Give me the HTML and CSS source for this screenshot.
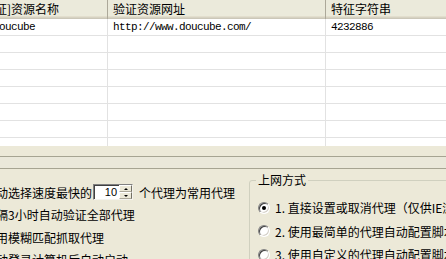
FILE: index.html
```html
<!DOCTYPE html>
<html lang="zh-CN">
<head>
<meta charset="utf-8">
<link rel="stylesheet" href="styles.css">
</head>
<body>
<div class="list">
  <div class="row head">
    <div class="cell c1">[验证]资源名称</div>
    <div class="cell c2">验证资源网址</div>
    <div class="cell c3">特征字符串</div>
  </div>
  <div class="row">
    <div class="cell c1 mono">doucube</div>
    <div class="cell c2 mono">http://www.doucube.com/</div>
    <div class="cell c3 mono">4232886</div>
  </div>
  <div class="row"><div class="cell c1"></div><div class="cell c2"></div><div class="cell c3"></div></div>
  <div class="row"><div class="cell c1"></div><div class="cell c2"></div><div class="cell c3"></div></div>
  <div class="row"><div class="cell c1"></div><div class="cell c2"></div><div class="cell c3"></div></div>
  <div class="row"><div class="cell c1"></div><div class="cell c2"></div><div class="cell c3"></div></div>
  <div class="row"><div class="cell c1"></div><div class="cell c2"></div><div class="cell c3"></div></div>
  <div class="row"><div class="cell c1"></div><div class="cell c2"></div><div class="cell c3"></div></div>
  <div class="row"><div class="cell c1"></div><div class="cell c2"></div><div class="cell c3"></div></div>
</div>
<div class="sep"></div>
<div class="bottom">
  <div class="opts">
    <div class="opt">自动选择速度最快的<span class="spin"><span class="val">10</span><span class="btns"><span class="btn"><i class="up"></i></span><span class="btn"><i class="dn"></i></span></span></span>个代理为常用代理</div>
    <div class="opt">每隔3小时自动验证全部代理</div>
    <div class="opt">启用模糊匹配抓取代理</div>
    <div class="opt">自动登录计算机后自动启动</div>
  </div>
  <fieldset class="group">
    <legend>上网方式</legend>
    <div class="radio-row"><span class="radio on"></span><span>1. 直接设置或取消代理（仅供IE浏览器使用）</span></div>
    <div class="radio-row"><span class="radio"></span><span>2. 使用最简单的代理自动配置脚本</span></div>
    <div class="radio-row"><span class="radio"></span><span>3. 使用自定义的代理自动配置脚本</span></div>
  </fieldset>
</div>
</body>
</html>
```
FILE: styles.css
```css
html, body {
  margin: 0;
  padding: 0;
}
body {
  width: 446px;
  height: 259px;
  overflow: hidden;
  background: #ece9d8;
  font-family: "Noto Sans CJK SC", sans-serif;
  font-size: 12px;
  color: #000;
}
.list {
  width: 473px;
  height: 146px;
  margin-left: -27px;
  background: #fff;
  overflow: hidden;
}
.row {
  display: grid;
  grid-template-columns: 135px 218px 1fr;
  height: 17px;
  box-sizing: border-box;
  border-bottom: 1px solid #e2e2e2;
}
.cell {
  box-sizing: border-box;
  border-right: 1px solid #e2e2e2;
  white-space: nowrap;
  overflow: hidden;
  line-height: 16px;
}
.c1 { padding-left: 20px; }
.c2 { padding-left: 5px; }
.c3 { padding-left: 5px; border-right: none; }
.mono {
  font-family: "Liberation Mono", monospace;
  font-size: 11px;
  letter-spacing: -0.6px;
}
.head {
  height: 19px;
  border-bottom: none;
}
.head .cell {
  background: #ebeadb;
  box-shadow: inset 0 -1px 0 #cbc7b8, inset 0 -2px 0 #d6d2c2, inset 0 -3px 0 #e2decd;
  border-right: 1px solid #aca899;
  line-height: 17px;
}
.head .c1 { padding-left: 6px; }
.head .c3 { border-right: none; }
.sep {
  margin-top: 10px;
  height: 11px;
  border-top: 1px solid #a6a492;
  border-bottom: 1px solid #a6a492;
  background: #eae8da;
}
.bottom {
  display: flex;
  align-items: flex-start;
}
.opts {
  flex: none;
  width: 265px;
  margin-left: -16px;
  padding-top: 12px;
}
.opt {
  height: 22.5px;
  display: flex;
  align-items: center;
  white-space: nowrap;
}
.spin {
  display: inline-flex;
  box-sizing: border-box;
  width: 40px;
  height: 16px;
  margin: 0 6px 0 1px;
  background: #fff;
  border-top: 1px solid #7f9db9;
  border-left: 1px solid #7f9db9;
  border-bottom: 1px solid #7f9db9;
  border-right: 1px solid #7f9db9;
  border-color: #808080 #f4f3ee #f4f3ee #808080;
  box-shadow: inset 1px 1px 0 #404040;
}
.val {
  flex: 1;
  text-align: right;
  padding-right: 2px;
  line-height: 14px;
  font-family: "Liberation Sans", sans-serif;
  font-size: 11px;
}
.btns {
  width: 13px;
  display: flex;
  flex-direction: column;
}
.btn {
  flex: 1;
  display: flex;
  align-items: center;
  justify-content: center;
  background: #ece9d8;
  border-top: 1px solid #fff;
  border-left: 1px solid #fff;
  border-right: 1px solid #716f64;
  border-bottom: 1px solid #aca899;
  box-sizing: border-box;
}
.btn i {
  width: 0;
  height: 0;
  border-left: 2px solid transparent;
  border-right: 2px solid transparent;
}
.up { border-bottom: 2px solid #000; }
.dn { border-top: 2px solid #000; }
.group {
  flex: none;
  width: 300px;
  height: 200px;
  margin: 5px 0 0 0;
  padding: 10px 0 0 8px;
  border: 1px solid #d0d0bf;
  border-radius: 3px;
  box-sizing: border-box;
  min-width: 0;
}
.group legend {
  padding: 0 2px;
  margin-left: -2px;
  line-height: 12px;
  font-size: 12px;
}
.radio-row {
  height: 23.5px;
  display: flex;
  align-items: center;
  gap: 5px;
  white-space: nowrap;
}
.radio {
  flex: none;
  width: 12px;
  height: 12px;
  box-sizing: border-box;
  border-radius: 50%;
  border: 1px solid;
  border-color: #808080 #fff #fff #808080;
  box-shadow: inset 1px 1px 0 #404040, inset -1px -1px 0 #d4d0c8;
  background: #fff;
  position: relative;
}
.radio.on::after {
  content: "";
  position: absolute;
  left: 3px;
  top: 3px;
  width: 4px;
  height: 4px;
  border-radius: 50%;
  background: #000;
}
```
